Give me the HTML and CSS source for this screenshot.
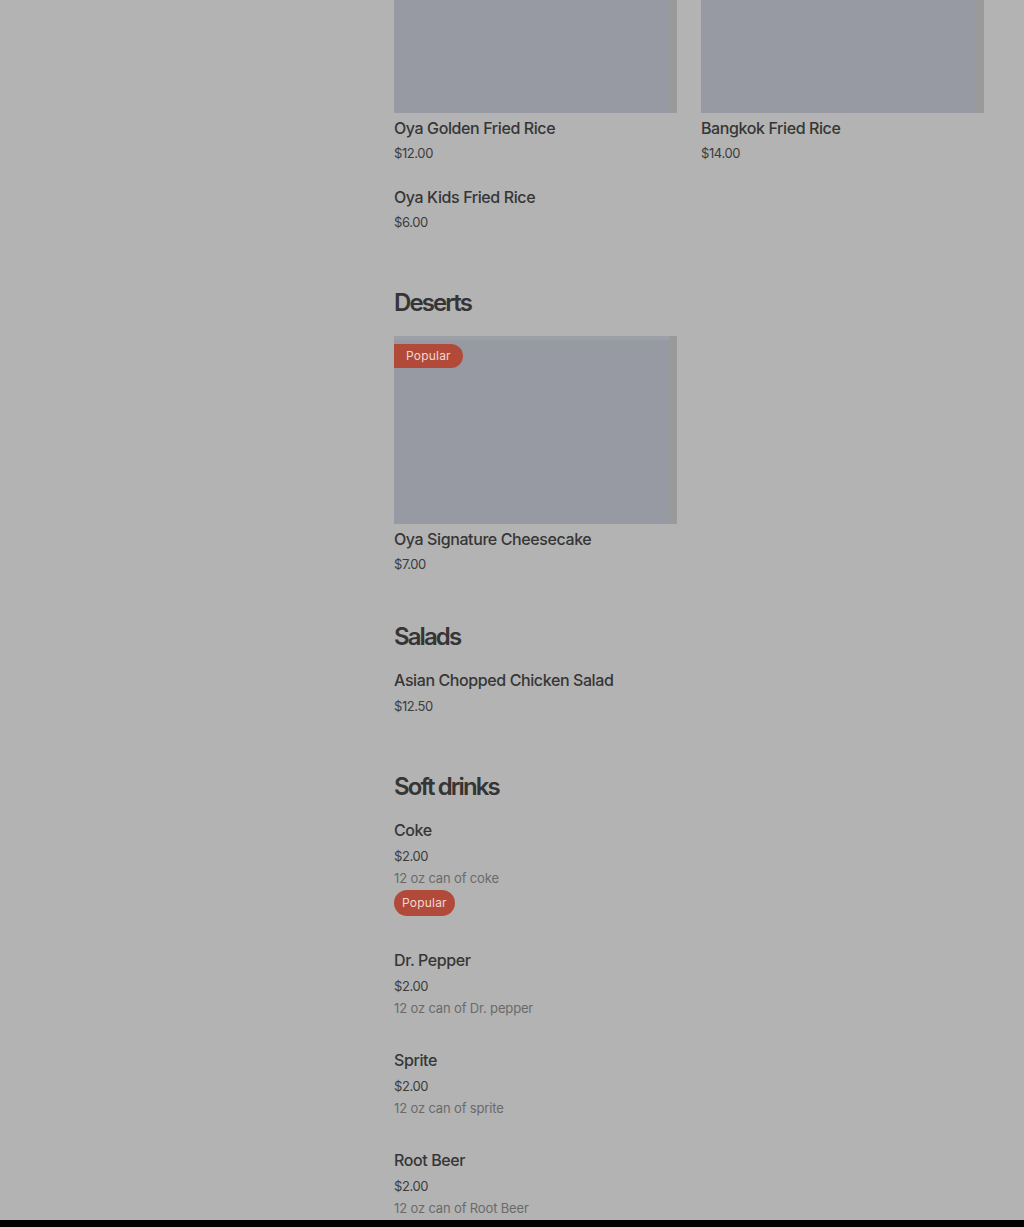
FILE: index.html
```html
<!DOCTYPE html>
<html lang="en">
<head>
    <meta charset="UTF-8">
    <meta name="viewport" content="width=device-width, initial-scale=1.0">
    <title>Oya Menu</title>
    <link rel="stylesheet" href="styles.css">
</head>
<body>
    <div class="page">
        <aside class="sidebar"></aside>

        <main class="menu">
            <section class="category first">
                <div class="items grid">
                    <div class="item">
                        <div class="photo"></div>
                        <div class="name">Oya Golden Fried Rice</div>
                        <div class="price">$12.00</div>
                    </div>
                    <div class="item">
                        <div class="photo"></div>
                        <div class="name">Bangkok Fried Rice</div>
                        <div class="price">$14.00</div>
                    </div>
                    <div class="item plain">
                        <div class="name">Oya Kids Fried Rice</div>
                        <div class="price">$6.00</div>
                    </div>
                </div>
            </section>

            <section class="category">
                <h2>Deserts</h2>
                <div class="items grid">
                    <div class="item">
                        <div class="photo">
                            <span class="badge tab">Popular</span>
                        </div>
                        <div class="name">Oya Signature Cheesecake</div>
                        <div class="price">$7.00</div>
                    </div>
                </div>
            </section>

            <section class="category">
                <h2>Salads</h2>
                <div class="items list">
                    <div class="item plain">
                        <div class="name">Asian Chopped Chicken Salad</div>
                        <div class="price">$12.50</div>
                    </div>
                </div>
            </section>

            <section class="category">
                <h2>Soft drinks</h2>
                <div class="items list">
                    <div class="item plain">
                        <div class="name">Coke</div>
                        <div class="price">$2.00</div>
                        <div class="desc">12 oz can of coke</div>
                        <span class="badge pill">Popular</span>
                    </div>
                    <div class="item plain">
                        <div class="name">Dr. Pepper</div>
                        <div class="price">$2.00</div>
                        <div class="desc">12 oz can of Dr. pepper</div>
                    </div>
                    <div class="item plain">
                        <div class="name">Sprite</div>
                        <div class="price">$2.00</div>
                        <div class="desc">12 oz can of sprite</div>
                    </div>
                    <div class="item plain">
                        <div class="name">Root Beer</div>
                        <div class="price">$2.00</div>
                        <div class="desc">12 oz can of Root Beer</div>
                    </div>
                </div>
            </section>
        </main>
    </div>

    <div class="bottom-bar"></div>
</body>
</html>
```

FILE: styles.css
```css
body {
    margin: 0;
    padding: 0;
    font-family: Inter, "Noto Sans", sans-serif;
    background-color: #b3b3b3;
    color: #343434;
    overflow: hidden;
}
.page {
    display: flex;
    gap: 24px;
    padding: 0 40px;
    margin-top: -75px;
}
.sidebar {
    width: 330px;
    flex-shrink: 0;
}
.menu {
    flex: 1;
}
.category {
    margin-top: 45px;
}
.category.first {
    margin-top: 0;
}
.category h2 {
    margin: 0 0 17px;
    padding-top: 1px;
    font-size: 24px;
    line-height: 32px;
    font-weight: 600;
    letter-spacing: -1.9px;
    color: #353535;
}
.items.grid {
    display: grid;
    grid-template-columns: 1fr 1fr;
    column-gap: 24px;
    row-gap: 23px;
}
.items.list {
    display: flex;
    flex-direction: column;
    gap: 23px;
}
.item.plain {
    padding-bottom: 8px;
}
.photo {
    position: relative;
    height: 188px;
    margin-bottom: 5px;
    background-color: #979aa2;
    box-shadow: inset -8px 0 0 #9a9a9b, inset 0 4px 0 #9ca0a7;
}
.name {
    font-size: 16px;
    line-height: 20px;
    font-weight: 500;
    letter-spacing: -0.4px;
    color: #363636;
    margin-bottom: 4px;
}
.items.list .name {
    margin-bottom: 5px;
}
.price {
    font-size: 13px;
    line-height: 22px;
    letter-spacing: -0.4px;
    color: #3c3c3c;
}
.desc {
    font-size: 13px;
    line-height: 22px;
    letter-spacing: -0.15px;
    color: #6a6a6a;
}
.badge {
    display: inline-block;
    background-color: #b24a3a;
    color: #f1d8d2;
    font-size: 12px;
    letter-spacing: 0.2px;
}
.badge.tab {
    position: absolute;
    top: 8px;
    left: 0;
    height: 24px;
    line-height: 24px;
    padding: 0 12px 0 12px;
    border-radius: 0 12px 12px 0;
}
.badge.pill {
    margin-top: 1px;
    margin-bottom: 3px;
    height: 26px;
    line-height: 26px;
    padding: 0 8px;
    border-radius: 13px;
}
.bottom-bar {
    position: fixed;
    left: 0;
    right: 0;
    bottom: 0;
    height: 7px;
    background-color: #000;
}
```
